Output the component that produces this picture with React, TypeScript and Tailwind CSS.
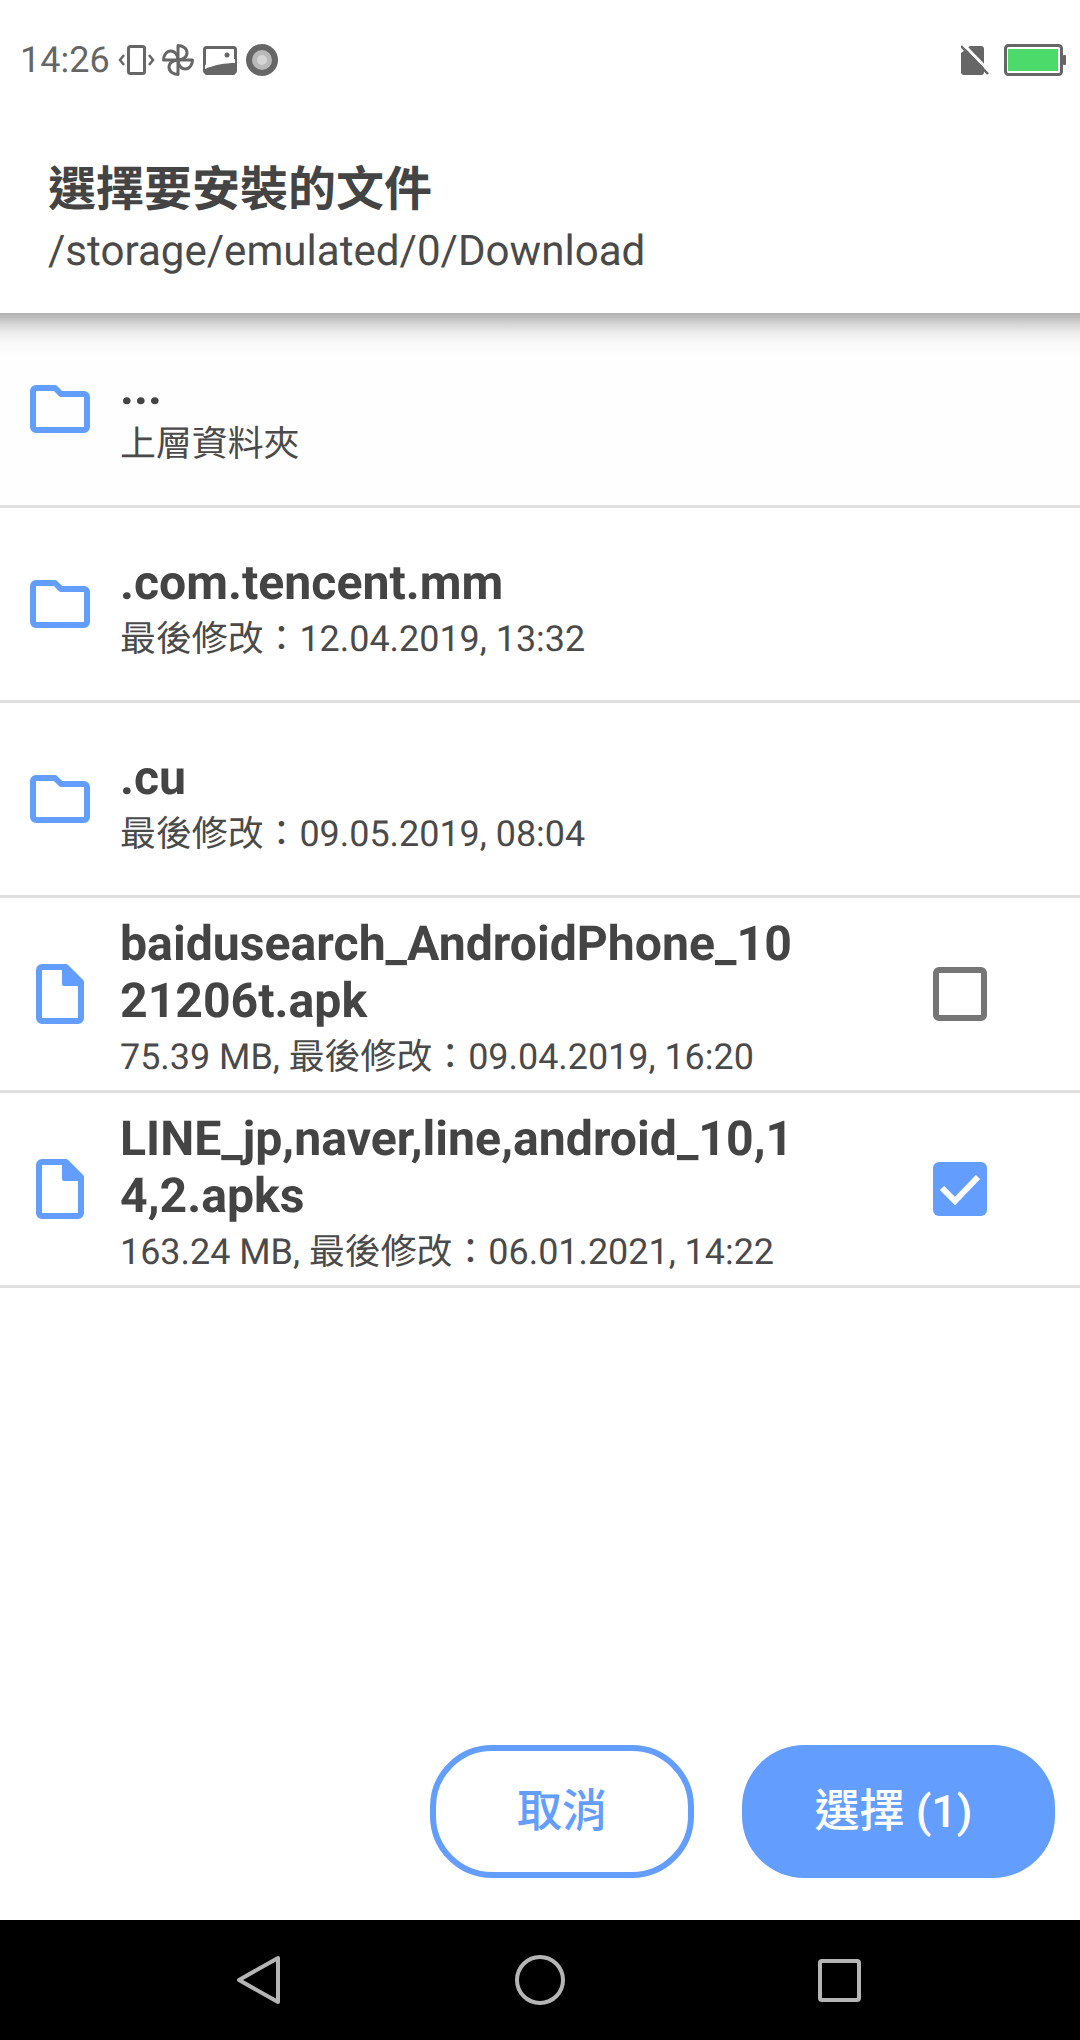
import { ReactNode } from 'react';

const FONT = "font-['Roboto','Noto_Sans_CJK_TC',sans-serif] [text-rendering:geometricPrecision]";

function VibrateIcon() {
  return (
    <svg width="38" height="32" viewBox="0 0 38 32" fill="none" stroke="#666" strokeWidth="3">
      <rect x="10.5" y="2.5" width="16" height="27" rx="2" />
      <path d="M6 11l-4 5 4 5M31 11l4 5-4 5" strokeWidth="2.5" />
    </svg>
  );
}

function PinwheelIcon() {
  return (
    <svg width="32" height="32" viewBox="0 0 32 32" fill="none" stroke="#666" strokeWidth="3" strokeLinejoin="round">
      <path d="M16 16V1.5A9 7.25 0 0 1 16 16" />
      <path d="M16 16H30.5A7.25 9 0 0 1 16 16" />
      <path d="M16 16V30.5A9 7.25 0 0 1 16 16" />
      <path d="M16 16H1.5A7.25 9 0 0 1 16 16" />
    </svg>
  );
}

function PictureIcon() {
  return (
    <svg width="34" height="30" viewBox="0 0 34 30">
      <rect x="1.5" y="2.5" width="31" height="25" rx="2" fill="none" stroke="#666" strokeWidth="3" />
      <circle cx="24" cy="10" r="2.5" fill="#666" />
      <path d="M2 20c9-4 20-6 30-6v14H2z" fill="#fff" />
      <path d="M2 24c9-4 20-6 30-6v11a1 1 0 0 1-1 1H3a1 1 0 0 1-1-1z" fill="#666" />
    </svg>
  );
}

function RecordIcon() {
  return (
    <svg width="32" height="32" viewBox="0 0 32 32">
      <circle cx="16" cy="16" r="16" fill="#666" />
      <circle cx="16" cy="16" r="10" fill="#b9b9b9" />
      <circle cx="16" cy="16" r="5" fill="#d6d6d6" />
    </svg>
  );
}

function NoSimIcon() {
  return (
    <svg width="28" height="30" viewBox="0 0 28 30">
      <path d="M9 1h11a3 3 0 0 1 3 3v23a3 3 0 0 1-3 3H3a3 3 0 0 1-3-3V8z" fill="#666" />
      <path d="M2 -1l27 28" stroke="#fff" strokeWidth="3" />
      <path d="M0 1l27 28" stroke="#666" strokeWidth="2.5" />
    </svg>
  );
}

function BatteryIcon() {
  return (
    <svg width="62" height="32" viewBox="0 0 62 32">
      <rect x="1.5" y="1.5" width="56" height="29" rx="3" fill="#fff" stroke="#666" strokeWidth="3" />
      <rect x="4" y="5" width="50" height="22" fill="#4cdb6a" />
      <rect x="59" y="11" width="3" height="10" rx="1" fill="#666" />
    </svg>
  );
}

function FolderIcon() {
  return (
    <svg width="60" height="48" viewBox="0 0 60 48" fill="none" stroke="#639eff" strokeWidth="6" strokeLinejoin="round">
      <path d="M3 6a3 3 0 0 1 3-3h19l6 6h23a3 3 0 0 1 3 3v30a3 3 0 0 1-3 3H6a3 3 0 0 1-3-3z" />
    </svg>
  );
}

function FileIcon() {
  return (
    <svg className="ml-[6px]" width="48" height="60" viewBox="0 0 48 60" fill="none" stroke="#639eff" strokeWidth="6" strokeLinejoin="round">
      <path d="M6 3h24l15 15v36a3 3 0 0 1-3 3H6a3 3 0 0 1-3-3V6a3 3 0 0 1 3-3z" />
      <path d="M28 4v16h16z" fill="#639eff" strokeWidth="4" />
    </svg>
  );
}

function Checkbox({ checked }: { checked?: boolean }) {
  if (checked) {
    return (
      <div className="w-[54px] h-[54px] rounded-[6px] bg-[#639eff] flex items-center justify-center">
        <svg width="44" height="36" viewBox="0 0 44 36" fill="none" stroke="#fff" strokeWidth="6">
          <path d="M4 17l13 13L40 6" />
        </svg>
      </div>
    );
  }
  return <div className="w-[54px] h-[54px] rounded-[6px] border-[6px] border-[#757575]" />;
}

function Row({ icon, title, sub, right, className }: { icon: ReactNode; title: string[]; sub: string; right?: ReactNode; className?: string }) {
  return (
    <div className={`h-[195px] flex items-center border-b-[3px] border-[#e0e0e0] ${className ?? ''}`}>
      <div className="w-[120px] pl-[30px] shrink-0">{icon}</div>
      <div className="flex-1 pt-[13px]">
        {title.map((t) => (
          <div key={t} className="text-[48.2px] leading-[57px] font-bold text-[#444]">{t}</div>
        ))}
        <div className="text-[35.9px] leading-[57px] text-[#4a4a4a]">{sub}</div>
      </div>
      {right && <div className="shrink-0 mr-[93px]">{right}</div>}
    </div>
  );
}

export default function App() {
  return (
    <div className={`w-[1080px] h-[2040px] flex flex-col bg-white ${FONT}`}>
      <div className="h-[120px] shrink-0 flex items-center justify-between pl-[20px] pr-[14px]">
        <div className="flex items-center">
          <span className="text-[#666] text-[36px] leading-none w-[88px]">14:26</span>
          <div className="ml-[10px]"><VibrateIcon /></div>
          <div className="ml-[6px]"><PinwheelIcon /></div>
          <div className="ml-[9px]"><PictureIcon /></div>
          <div className="ml-[9px]"><RecordIcon /></div>
        </div>
        <div className="flex items-center gap-[15px]">
          <NoSimIcon />
          <BatteryIcon />
        </div>
      </div>
      <div className="h-[193px] shrink-0 pl-[48px] pt-[40px]">
        <div className="text-[48px] leading-[60px] font-bold text-[#444]">選擇要安裝的文件</div>
        <div className="text-[42.1px] leading-[64px] text-[#4a4a4a]">/storage/emulated/0/Download</div>
      </div>
      <div className="flex-1 flex flex-col">
        <Row
          className="bg-[linear-gradient(#b0b0b0_0,#d2d2d2_10px,#eeeeee_20px,#f9f9f9_30px,#fefefe_44px)]"
          icon={<FolderIcon />}
          title={['...']}
          sub="上層資料夾"
        />
        <Row icon={<FolderIcon />} title={['.com.tencent.mm']} sub="最後修改：12.04.2019, 13:32" />
        <Row icon={<FolderIcon />} title={['.cu']} sub="最後修改：09.05.2019, 08:04" />
        <Row
          icon={<FileIcon />}
          title={['baidusearch_AndroidPhone_10', '21206t.apk']}
          sub="75.39 MB, 最後修改：09.04.2019, 16:20"
          right={<Checkbox />}
        />
        <Row
          icon={<FileIcon />}
          title={['LINE_jp,naver,line,android_10,1', '4,2.apks']}
          sub="163.24 MB, 最後修改：06.01.2021, 14:22"
          right={<Checkbox checked />}
        />
        <div className="mt-auto mb-[42px] mr-[25px] flex justify-end gap-[48px]">
          <button className="w-[264px] h-[133px] rounded-[62px] border-[6px] border-[#639eff] text-[#639eff] text-[45px] font-medium">
            取消
          </button>
          <button className="w-[313px] h-[133px] pr-[10px] rounded-[62px] bg-[#639eff] text-white text-[45px] font-medium">
            選擇 (1)
          </button>
        </div>
      </div>
      <div className="h-[120px] shrink-0 bg-black flex items-center">
        <svg className="ml-[236px]" width="44" height="50" viewBox="0 0 44 50" fill="none" stroke="#b5b5b5" strokeWidth="4" strokeLinejoin="round">
          <path d="M42 3v44L3 25z" />
        </svg>
        <svg className="ml-[235px]" width="50" height="50" viewBox="0 0 50 50" fill="none" stroke="#b5b5b5" strokeWidth="4">
          <circle cx="25" cy="25" r="23" />
        </svg>
        <svg className="ml-[253px]" width="43" height="43" viewBox="0 0 43 43" fill="none" stroke="#b5b5b5" strokeWidth="4" strokeLinejoin="round">
          <rect x="2" y="2" width="39" height="39" rx="2" />
        </svg>
      </div>
    </div>
  );
}
